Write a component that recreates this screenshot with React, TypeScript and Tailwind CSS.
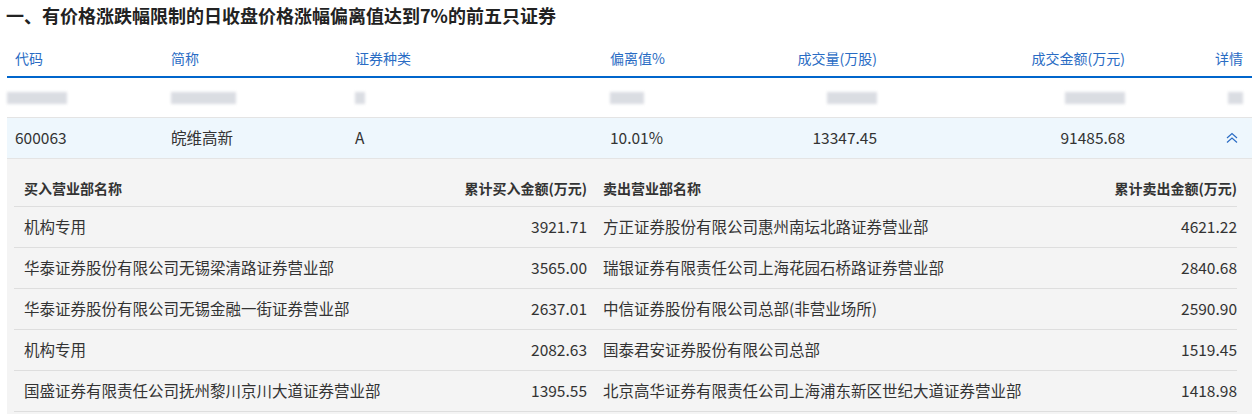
import React from 'react';

const rows = [
  ['机构专用', '3921.71', '方正证券股份有限公司惠州南坛北路证券营业部', '4621.22'],
  ['华泰证券股份有限公司无锡梁清路证券营业部', '3565.00', '瑞银证券有限责任公司上海花园石桥路证券营业部', '2840.68'],
  ['华泰证券股份有限公司无锡金融一街证券营业部', '2637.01', '中信证券股份有限公司总部(非营业场所)', '2590.90'],
  ['机构专用', '2082.63', '国泰君安证券股份有限公司总部', '1519.45'],
  ['国盛证券有限责任公司抚州黎川京川大道证券营业部', '1395.55', '北京高华证券有限责任公司上海浦东新区世纪大道证券营业部', '1418.98'],
];

function Blur({ w }: { w: string }) {
  return <span className={`inline-block h-[12px] ${w} bg-gray-300 blur-[1.5px] opacity-80`} />;
}

export default function App() {
  return (
    <div className="w-[1252px] h-[414px] overflow-hidden bg-white text-[15.5px] text-[#333]" style={{ fontFamily: '"Microsoft YaHei", "Noto Sans CJK SC", sans-serif' }}>
      <h1 className="pl-[6px] pt-[1px] h-[40px] text-[18px] font-bold text-[#222] leading-[28px]">
        一、有价格涨跌幅限制的日收盘价格涨幅偏离值达到7%的前五只证券
      </h1>
      <div className="ml-[7px]">
        <div className="flex h-[38px] items-center border-b-2 border-[#0066cc] text-[#2a6cc4] text-[14px]">
          <div className="w-[156px] pl-[8px]">代码</div>
          <div className="w-[184px] pl-[8px]">简称</div>
          <div className="w-[255px] pl-[8px]">证券种类</div>
          <div className="w-[120px] pl-[8px]">偏离值%</div>
          <div className="w-[155px] text-right">成交量(万股)</div>
          <div className="w-[248px] text-right">成交金额(万元)</div>
          <div className="flex-1 text-right pr-[9px]">详情</div>
        </div>
        <div className="flex h-[40px] items-center border-b border-[#e4e4e4]">
          <div className="w-[156px]"><Blur w="w-[60px]" /></div>
          <div className="w-[184px] pl-[8px]"><Blur w="w-[65px]" /></div>
          <div className="w-[255px] pl-[8px]"><Blur w="w-[10px]" /></div>
          <div className="w-[120px] pl-[8px]"><Blur w="w-[34px]" /></div>
          <div className="w-[155px] text-right"><Blur w="w-[50px]" /></div>
          <div className="w-[248px] text-right"><Blur w="w-[60px]" /></div>
          <div className="flex-1 text-right pr-[9px]"><Blur w="w-[15px]" /></div>
        </div>
        <div className="flex h-[41px] items-center bg-[#eef7fd] border-b border-[#e4e4e4]">
          <div className="w-[156px] pl-[8px]">600063</div>
          <div className="w-[184px] pl-[8px]">皖维高新</div>
          <div className="w-[255px] pl-[8px]">A</div>
          <div className="w-[120px] pl-[8px]">10.01%</div>
          <div className="w-[155px] text-right">13347.45</div>
          <div className="w-[248px] text-right">91485.68</div>
          <div className="flex-1 flex justify-end pr-[13px]">
            <svg width="14" height="12" viewBox="0 0 14 12" fill="none" stroke="#2a6cc4" strokeWidth="1.2">
              <path d="M2 6 L7 1.5 L12 6 M2 10.5 L7 6 L12 10.5" />
            </svg>
          </div>
        </div>
        <div className="bg-[#f4f4f4] pl-[7px] pr-[15px] pt-[12px] h-[300px]">
          <div className="flex h-[36px] items-center border-b border-[#dedede] font-bold text-[14px] text-[#333]">
            <div className="w-[330px] pl-[10px]">买入营业部名称</div>
            <div className="w-[243px] text-right">累计买入金额(万元)</div>
            <div className="flex-1 pl-[16px]">卖出营业部名称</div>
            <div className="w-[200px] text-right">累计卖出金额(万元)</div>
          </div>
          {rows.map((r, i) => (
            <div key={i} className="flex h-[41px] items-center border-b border-[#dedede]">
              <div className="w-[330px] pl-[10px] whitespace-nowrap">{r[0]}</div>
              <div className="w-[243px] text-right">{r[1]}</div>
              <div className="flex-1 pl-[16px] whitespace-nowrap">{r[2]}</div>
              <div className="w-[200px] text-right">{r[3]}</div>
            </div>
          ))}
        </div>
      </div>
    </div>
  );
}
